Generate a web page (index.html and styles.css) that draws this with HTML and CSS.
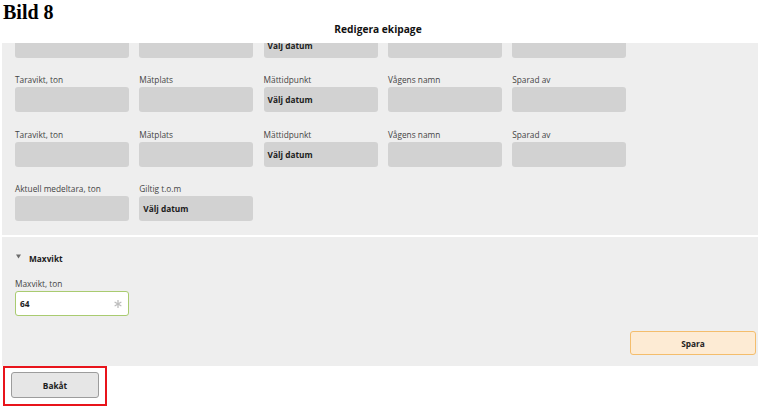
FILE: index.html
```html
<!DOCTYPE html>
<html lang="sv">
<head>
<meta charset="utf-8">
<title>Redigera ekipage</title>
<link rel="stylesheet" href="styles.css">
</head>
<body>
<div class="doc-title">Bild 8</div>
<div class="dialog-title">Redigera ekipage</div>

<div class="panel panel-scroll">
  <div class="grid">
    <div class="cell"><div class="field"></div></div>
    <div class="cell"><div class="field"></div></div>
    <div class="cell"><div class="field">Välj datum</div></div>
    <div class="cell"><div class="field"></div></div>
    <div class="cell"><div class="field"></div></div>

    <div class="cell"><div class="label">Taravikt, ton</div><div class="field"></div></div>
    <div class="cell"><div class="label">Mätplats</div><div class="field"></div></div>
    <div class="cell"><div class="label">Mättidpunkt</div><div class="field">Välj datum</div></div>
    <div class="cell"><div class="label">Vågens namn</div><div class="field"></div></div>
    <div class="cell"><div class="label">Sparad av</div><div class="field"></div></div>

    <div class="cell"><div class="label">Taravikt, ton</div><div class="field"></div></div>
    <div class="cell"><div class="label">Mätplats</div><div class="field"></div></div>
    <div class="cell"><div class="label">Mättidpunkt</div><div class="field">Välj datum</div></div>
    <div class="cell"><div class="label">Vågens namn</div><div class="field"></div></div>
    <div class="cell"><div class="label">Sparad av</div><div class="field"></div></div>

    <div class="cell"><div class="label">Aktuell medeltara, ton</div><div class="field"></div></div>
    <div class="cell"><div class="label">Giltig t.o.m</div><div class="field">Välj datum</div></div>
  </div>
</div>

<div class="panel panel-max">
  <div class="section-head">
    <svg class="caret" width="5" height="5" viewBox="0 0 5 5"><polygon points="0,0.5 5,0.5 2.5,4.5" fill="#6b6b6b"/></svg>
    <span>Maxvikt</span>
  </div>
  <div class="cell">
    <div class="label">Maxvikt, ton</div>
    <div class="input-box">
      <span class="value">64</span>
      <svg class="req" width="8" height="8" viewBox="0 0 8 8"><g stroke="#bdbdbd" stroke-width="1.3" stroke-linecap="round"><line x1="4" y1="0.6" x2="4" y2="7.4"/><line x1="1.05" y1="2.3" x2="6.95" y2="5.7"/><line x1="1.05" y1="5.7" x2="6.95" y2="2.3"/></g></svg>
    </div>
  </div>
  <div class="actions">
    <button class="btn btn-save">Spara</button>
  </div>
</div>

<div class="back-highlight">
  <button class="btn btn-back">Bakåt</button>
</div>
</body>
</html>
```

FILE: styles.css
```css
* { box-sizing: border-box; }

html, body {
  margin: 0;
  padding: 0;
  background: #ffffff;
}

body {
  font-family: "Open Sans", "Noto Sans", sans-serif;
  color: #222;
  width: 762px;
  height: 411px;
  overflow: hidden;
}

.doc-title {
  font-family: "Liberation Serif", "Times New Roman", serif;
  font-weight: bold;
  font-size: 20px;
  line-height: 22px;
  height: 23px;
  padding: 1px 0 0 3px;
  color: #000;
}

.dialog-title {
  height: 20px;
  line-height: 13px;
  font-size: 10.2px;
  font-weight: 700;
  text-align: center;
  padding-right: 6px;
  color: #111;
}

.panel {
  margin: 0 4px 0 2px;
  background: #eeeeee;
  overflow: hidden;
}

.panel-scroll {
  height: 192px;
  padding-left: 13px;
}

.grid {
  margin-top: -10.5px;
  display: grid;
  grid-template-columns: repeat(5, 114px);
  column-gap: 10.3px;
  row-gap: 16.5px;
}

.cell {
  display: flex;
  flex-direction: column;
  justify-content: flex-end;
}

.label {
  font-size: 8.3px;
  line-height: 12px;
  height: 12px;
  margin-bottom: 1px;
  color: #444;
  white-space: nowrap;
}

.field {
  height: 25px;
  background: #d2d2d2;
  border-radius: 3px;
  display: flex;
  align-items: center;
  padding-left: 4px;
  font-size: 8.3px;
  font-weight: 700;
  color: #1c1c1c;
}

.panel-max {
  margin-top: 2px;
  height: 129px;
  padding: 15px 2px 0 13px;
}

.section-head {
  height: 12px;
  display: flex;
  align-items: center;
  font-size: 8.3px;
  font-weight: 700;
  color: #1c1c1c;
  margin-bottom: 14px;
}

.caret {
  display: block;
  margin: -3px 8px 0 1px;
}

.panel-max .cell {
  width: 114px;
}

.input-box {
  height: 25px;
  background: #ffffff;
  border: 1px solid #a9cb70;
  border-radius: 3px;
  display: flex;
  align-items: center;
  justify-content: space-between;
  padding: 0 6px 0 4px;
  font-size: 8.3px;
  font-weight: 700;
  color: #1c1c1c;
}

.req { display: block; }

.actions {
  display: flex;
  justify-content: flex-end;
  margin-top: 15px;
}

.btn {
  font-family: "Open Sans", "Noto Sans", sans-serif;
  font-size: 8.3px;
  font-weight: 700;
  color: #1c1c1c;
  border-radius: 3px;
  padding: 0;
  cursor: pointer;
}

.btn-save {
  width: 126px;
  height: 24px;
  background: #fdebd4;
  border: 1px solid #f4bd6c;
}

.back-highlight {
  margin-left: 3px;
  width: 104px;
  height: 40px;
  border: 2px solid #e8141b;
  padding: 4px 6px 6px 6px;
}

.btn-back {
  display: block;
  width: 88px;
  height: 26px;
  background: #e6e6e6;
  border: 1px solid #9c9c9c;
}
```
